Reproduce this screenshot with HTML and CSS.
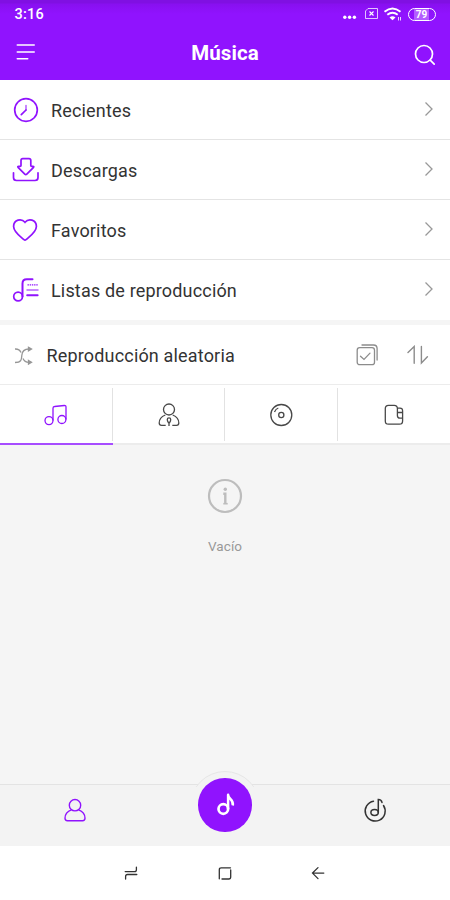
FILE: index.html
```html
<!DOCTYPE html>
<html lang="es">
<head>
<meta charset="utf-8">
<title>Música</title>
<link rel="stylesheet" href="styles.css">
</head>
<body>
<header class="header">
  <div class="status">
    <span class="time">3:16</span>
    <div class="indicators">
      <svg width="62" height="16" viewBox="0 0 62 16" fill="none" stroke="#fff">
        <g fill="#fff" stroke="none"><circle cx="3.800" cy="11.300" r="1.700"/><circle cx="8.600" cy="11.300" r="1.700"/><circle cx="13.400" cy="11.300" r="1.700"/></g>
        <path d="M27 2.500h9.500v10h-12v-7.500z" stroke-width="1" opacity=".75"/>
        <path d="M28.500 5.500l4 4m0-4l-4 4" stroke-width="1.100"/>
        <path d="M43.500 5.800Q51.500 -.8 59.500 5.800M46.300 8.800Q51.500 4.500 56.700 8.800" stroke-width="1.900"/>
        <path d="M48.500 11.500Q51.500 9 54.500 11.500L51.500 14.200z" fill="#fff" stroke="none"/>
        <path d="M57.500 11v3.500M59.500 11v3.500" stroke-width="1" opacity=".8"/>
      </svg>
      <span class="battery">79</span>
    </div>
  </div>
  <div class="titlebar">
    <svg width="20" height="20" viewBox="0 0 20 20" stroke="#fff" stroke-width="1.600" stroke-linecap="round"><path d="M1.300 3h16.900M1.300 10h16.900M1.300 16.800h10.400"/></svg>
    <h1>Música</h1>
    <svg class="search" width="22" height="22" viewBox="0 0 22 22" fill="none" stroke="#fff" stroke-width="1.700" stroke-linecap="round"><circle cx="10" cy="10" r="8.500"/><path d="M16.200 16.200l4 4"/></svg>
  </div>
</header>
<main>
  <ul class="menu">
    <li><svg class="lead" viewBox="0 0 29 29"><circle cx="15" cy="15" r="11.300"/><path d="M15 15l-4.700 4.700"/><path d="M15 10.500V15" opacity=".6"/></svg><span>Recientes</span><svg class="chevron" viewBox="0 0 10 16"><path d="M1.500 1.500L8 8l-6.500 6.500"/></svg></li>
    <li><svg class="lead" viewBox="0 0 29 29"><path d="M10 10.500V5.500Q10 3.700 11.800 3.700H18Q19.800 3.700 19.800 5.500V10.500Q19.800 11.300 20.600 11.300H21.800Q23.500 11.300 22.300 12.600L15.800 19.200Q14.800 20.200 13.800 19.200L7.300 12.600Q6.100 11.300 7.800 11.300H9.200Q10 11.300 10 10.500z"/><path d="M2.500 17.800V22.500Q2.500 25.500 5.500 25.500H24Q27 25.500 27 22.500V17.800"/></svg><span>Descargas</span><svg class="chevron" viewBox="0 0 10 16"><path d="M1.500 1.500L8 8l-6.500 6.500"/></svg></li>
    <li><svg class="lead" viewBox="0 0 29 29"><path d="M14 7.300C10.500 3 2.700 4.300 2.600 11.400C2.600 16.800 9 21.200 13 24.700Q14 25.600 15 24.700C19 21.200 25.400 16.800 25.400 11.400C25.300 4.300 17.500 3 14 7.300z"/></svg><span>Favoritos</span><svg class="chevron" viewBox="0 0 10 16"><path d="M1.500 1.500L8 8l-6.500 6.500"/></svg></li>
    <li><svg class="lead" viewBox="0 0 29 29"><circle cx="7.100" cy="21.500" r="4.400"/><path d="M11.500 21.500V8.500Q11.500 4.200 15.800 4.200H21.500" stroke-width="2"/><path d="M16.500 9.800H27" stroke-dasharray="1.400 .8" stroke-width="1.300" stroke-linecap="butt"/><path d="M16.200 15H26.800" stroke-width="1.900" opacity=".5"/><path d="M16.200 20.200H26.600" stroke-width="2"/></svg><span>Listas de reproducción</span><svg class="chevron" viewBox="0 0 10 16"><path d="M1.500 1.500L8 8l-6.500 6.500"/></svg></li>
  </ul>
  <div class="shuffle">
    <svg width="20" height="20" viewBox="0 0 20 20" fill="none" stroke="#969696" stroke-width="1.300"><path d="M1 4Q5.500 3.800 7 7.500M1 17.500C8 17.500 7.500 13.500 7.800 10.500C8 7 10 4 15 4M9 13.500Q10.500 17.300 15 17.300"/><path d="M14.500 2.300L17.500 4l-3 1.800zM14.500 15.500l3 1.800-3 1.800z" fill="#969696"/></svg>
    <span>Reproducción aleatoria</span>
    <svg class="select" width="24" height="24" viewBox="0 0 24 24" fill="none" stroke="#8c8c8c" stroke-width="1.300" stroke-linecap="round"><rect x="2.200" y="4.700" width="17.300" height="17" rx="2.500"/><path d="M5.500 13.200l3.500 3.200 6-6.300M7 2h11.500q3.600 0 3.600 3.600V17"/></svg>
    <svg class="sort" width="22" height="20" viewBox="0 0 22 20" fill="none" stroke="#8c8c8c" stroke-width="1.400" stroke-linecap="round"><path d="M1 7.500L7.200 1.500V18.300M14.400 1.500V18l6-6.300"/></svg>
  </div>
  <nav class="tabs">
    <a class="active"><svg viewBox="0 0 26 26"><circle cx="6" cy="18.600" r="4"/><circle cx="18.900" cy="17.500" r="4"/><path d="M10 18.600V6.200Q10 4.600 11.500 4.500L21.300 3.500Q23 3.400 23 5V17.500"/></svg></a>
    <a><svg viewBox="0 0 26 26"><circle cx="13" cy="7.500" r="5.500"/><path d="M9.700 23.300H5.500Q3.200 23.300 3.200 21C3.200 16.500 6 14.300 9.300 13M16.700 13C20 14.300 22.800 16.500 22.800 21Q22.800 23.300 20.500 23.300H16.300M13 20.500V24M13 15.800q1.700 0 1.700 1.700 0 1.500-1 3h-1.400q-1-1.500-1-3 0-1.700 1.700-1.700z"/></svg></a>
    <a><svg viewBox="0 0 26 26"><circle cx="13.300" cy="13" r="10.500"/><circle cx="13.300" cy="13" r="2.600"/><path d="M6.500 10Q7.600 7 10.300 6"/></svg></a>
    <a><svg viewBox="0 0 26 26"><path d="M21.600 15.500V19Q21.600 22.200 18.400 22.200H7.500Q4.300 22.200 4.300 19V6.500Q4.300 3.300 7.500 3.300H13.200Q16.400 3.300 16.400 6.500V13.500Q16.400 16.200 19 16.200H21.600V9Q21.600 6.200 19 6.200H16.400M16.400 10.500H21.600"/></svg></a>
  </nav>
  <section class="empty">
    <svg width="36" height="36" viewBox="0 0 36 36" fill="none" stroke="#bdbdbd"><circle cx="18" cy="18" r="16" stroke-width="2.200"/><circle cx="18.300" cy="11.200" r="1.700" fill="#bdbdbd" stroke="none"/><path d="M16.300 15.800h2v9.700" stroke-width="2.400"/><path d="M16.300 25.700h4.400" stroke-width="1.600"/></svg>
    <p>Vacío</p>
  </section>
</main>
<footer class="bottom">
  <a><svg width="26" height="26" viewBox="0 0 26 26" fill="none" stroke="#9013fe" stroke-width="1.400"><circle cx="13" cy="8.200" r="5.700"/><path d="M9.500 12.900C5.600 14.200 3 17.500 3 21.300Q3 23.700 5.400 23.700H20.600Q23 23.700 23 21.300C23 17.500 20.400 14.200 16.500 12.900"/></svg></a>
  <div class="play-slot"><div class="halo"></div><div class="play"><svg width="24" height="26" viewBox="0 0 24 26" fill="none" stroke="#fff" stroke-width="2.700"><circle cx="10.300" cy="17" r="4.800"/><path d="M15.100 17V2.800C15.100 7 21 7.500 19.800 13.500" stroke-width="2.500" stroke-linejoin="round"/></svg></div></div>
  <a><svg class="player" width="26" height="26" viewBox="0 0 26 26" fill="none" stroke="#333" stroke-width="1.500" stroke-linecap="round"><path d="M11.500 3.200A10 10 0 1 0 21.500 7.500"/><ellipse cx="12.600" cy="14.500" rx="3.700" ry="2.900"/><path d="M16.300 14.500V1.500Q19.500 1.500 20 4.500"/></svg></a>
</footer>
<nav class="system">
  <svg viewBox="0 0 16 16"><path d="M2.200 6.600H11.500Q13.400 6.600 13.400 4.700V2.200M13.800 9.500H4.500Q2.600 9.500 2.600 11.400V14"/></svg>
  <svg viewBox="0 0 16 16"><path d="M2.300 13.800V4.700Q2.300 2.800 4.200 2.800H13.500M13.700 5V12.100Q13.700 14 11.800 14H5"/></svg>
  <svg viewBox="0 0 16 16"><path d="M12.800 8.100H1.700M7 2.600L1.500 8.100 7 13.600"/></svg>
</nav>
</body>
</html>
```
FILE: styles.css
```css
* { box-sizing: border-box; }
body {
  margin: 0;
  width: 450px;
  height: 900px;
  display: flex;
  flex-direction: column;
  overflow: hidden;
  background: #f5f5f5;
  color: #333;
  font-family: Roboto, sans-serif;
}
svg { display: block; flex: none; }
.header {
  height: 80px;
  background: linear-gradient(#8010e2 0, #8010e2 3px, #8810f0 4px, #9013fe 14px);
  color: #fff;
}
.status {
  height: 28px;
  padding: 0 14.500px;
  display: flex;
  align-items: center;
  justify-content: space-between;
}
.time { padding-top: 1px; font-size: 14.500px; font-weight: 500; letter-spacing: .2px; }
.indicators { display: flex; align-items: center; gap: 5px; }
.battery {
  width: 28px;
  height: 13px;
  border: 1.500px solid #fff;
  border-radius: 6.500px;
  background: linear-gradient(90deg, transparent 5px, #b35cff 5px, #b35cff 20px, transparent 20px);
  font-size: 10px;
  font-weight: 700;
  line-height: 11px;
  text-align: center;
}
.titlebar {
  height: 52px;
  padding: 0 14px 0 16px;
  display: flex;
  align-items: center;
  justify-content: space-between;
}
.titlebar > svg:first-child { margin-top: -5px; }
.titlebar .search { margin-top: 2px; }
.titlebar h1 { margin: 0; font-size: 20.500px; font-weight: 700; line-height: 50px; height: 52px; letter-spacing: .1px; }
.menu { margin: 0; padding: 0; list-style: none; background: #fff; }
.menu li {
  height: 60px;
  padding: 0 16px 0 11px;
  display: flex;
  align-items: center;
  border-bottom: 1px solid #e4e4e4;
}
.menu li:last-child { border-bottom-color: #fff; }
.menu span { flex: 1; margin-left: 11px; padding-top: 2px; font-size: 18px; letter-spacing: .17px; }
.lead {
  width: 29px;
  height: 29px;
  fill: none;
  stroke: #9013fe;
  stroke-width: 1.700;
  stroke-linecap: round;
}
.chevron { width: 10px; height: 16px; margin-top: -1px; fill: none; stroke: #999; stroke-width: 1.300; }
.shuffle {
  height: 60px;
  margin-top: 5px;
  padding: 0 21px 0 14px;
  display: flex;
  align-items: center;
  background: #fff;
  border-bottom: 1px solid #ececec;
}
.shuffle span { flex: 1; margin-left: 12.500px; padding-top: 2px; font-size: 18px; letter-spacing: .17px; }
.sort { margin-left: 28px; }
.tabs {
  height: 60px;
  display: grid;
  grid-template-columns: repeat(4, 1fr);
  background: linear-gradient(#fff, #fff) 0 0 / 100% 58px no-repeat, #ececec;
}
.tabs a {
  display: flex;
  justify-content: center;
  padding-top: 17px;
  background: linear-gradient(#e2e2e2, #e2e2e2) 100% 3px / 1px 53px no-repeat;
}
.tabs a:last-child { background: none; }
.tabs .active { border-bottom: 2px solid #a74dff; }
.tabs svg { width: 26px; height: 26px; fill: none; stroke: #484848; stroke-width: 1.300; }
.tabs .active svg { stroke: #9013fe; }
.empty {
  height: 339px;
  padding-top: 33px;
  display: flex;
  flex-direction: column;
  align-items: center;
}
.empty p { margin: 24px 0 0; color: #999; font-size: 13.500px; line-height: 16px; letter-spacing: .1px; }
.bottom {
  height: 62px;
  display: grid;
  grid-template-columns: repeat(3, 1fr);
  justify-items: center;
  background: #f3f3f3;
  border-top: 1px solid #e3e3e3;
}
.bottom a { padding-top: 12px; }
.player { margin-top: 1px; }
.play-slot { position: relative; width: 60px; }
.halo {
  position: absolute;
  left: -5px;
  top: -14px;
  width: 70px;
  height: 70px;
  border: 1px solid #e6e6e6;
  border-radius: 50%;
  background: #f3f3f3;
  clip-path: inset(0 0 54px);
}
.play {
  position: absolute;
  left: 3px;
  top: -7px;
  width: 53.500px;
  height: 53.500px;
  border-radius: 50%;
  background: #9013fe;
  display: flex;
  align-items: center;
  justify-content: center;
}
.system {
  flex: 1;
  padding: 19px 123px 0;
  display: flex;
  justify-content: space-between;
  background: #fff;
}
.system svg { width: 16px; height: 16px; fill: none; stroke: #333; stroke-width: 1.300; stroke-linecap: round; }
```
